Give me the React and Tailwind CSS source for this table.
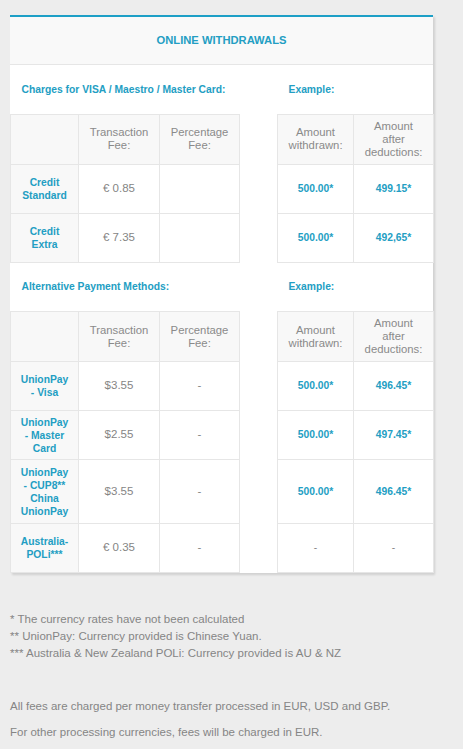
const CARD_ROWS = [
  { label: ["Credit", "Standard"], fee: "€ 0.85", pct: "", amount: "500.00*", after: "499.15*" },
  { label: ["Credit", "Extra"], fee: "€ 7.35", pct: "", amount: "500.00*", after: "492,65*" },
];

const ALT_ROWS = [
  { label: ["UnionPay", "- Visa"], fee: "$3.55", pct: "-", amount: "500.00*", after: "496.45*" },
  { label: ["UnionPay", "- Master", "Card"], fee: "$2.55", pct: "-", amount: "500.00*", after: "497.45*" },
  { label: ["UnionPay", "- CUP8**", "China", "UnionPay"], fee: "$3.55", pct: "-", amount: "500.00*", after: "496.45*", tall: true },
  { label: ["Australia-", "POLi***"], fee: "€ 0.35", pct: "-", amount: "-", after: "-", plain: true },
];

const cell = "border border-[#e6e6e6] text-center align-middle";
const head = `${cell} bg-[#f8f8f8] text-[11.3px] leading-[13px] text-[#8a8a8a] font-normal`;

function Section({ title, rows }) {
  return (
    <table className="w-full border-collapse table-fixed">
      <colgroup>
        <col className="w-[68px]" />
        <col className="w-[81px]" />
        <col className="w-[80px]" />
        <col className="w-[38px]" />
        <col className="w-[76px]" />
        <col className="w-[80px]" />
      </colgroup>
      <tbody>
        <tr className="h-[49px]">
          <td colSpan={3} className="pl-[11px] text-left align-middle text-[10.3px] font-bold text-[#239ec3]">
            {title}
          </td>
          <td />
          <td colSpan={2} className="pl-[11px] text-left align-middle text-[10.3px] font-bold text-[#239ec3]">
            Example:
          </td>
        </tr>
        <tr className="h-[50px]">
          <th className={head} />
          <th className={head}>Transaction<br />Fee:</th>
          <th className={head}>Percentage<br />Fee:</th>
          <td rowSpan={rows.length + 1} className="border-x border-[#e6e6e6] bg-white" />
          <th className={head}>Amount<br />withdrawn:</th>
          <th className={head}>Amount<br />after<br />deductions:</th>
        </tr>
        {rows.map((r, i) => (
          <tr key={i} className={r.tall ? "h-[64px]" : "h-[49px]"}>
            <td className={`${cell} bg-[#f8f8f8] text-[10.3px] leading-[13px] font-bold text-[#239ec3]`}>
              {r.label.map((l, j) => (
                <div key={j}>{l}</div>
              ))}
            </td>
            <td className={`${cell} text-[11.5px] text-[#858585]`}>{r.fee}</td>
            <td className={`${cell} text-[11.5px] text-[#858585]`}>{r.pct}</td>
            <td className={`${cell} text-[10.3px] ${r.plain ? "font-normal text-[#858585]" : "font-bold text-[#239ec3]"}`}>{r.amount}</td>
            <td className={`${cell} text-[10.3px] ${r.plain ? "font-normal text-[#858585]" : "font-bold text-[#239ec3]"}`}>{r.after}</td>
          </tr>
        ))}
      </tbody>
    </table>
  );
}

export default function App() {
  return (
    <div className="min-h-[749px] bg-[#ededed] pt-[15px] pb-4 font-['Liberation_Sans',Arial,sans-serif]">
      <div className="ml-[10px] w-[423px] bg-white border-t-2 border-[#1d9fc6] shadow-[2px_2px_2px_rgba(0,0,0,0.12)]">
        <div className="h-[48px] flex items-center justify-center bg-[#f9f9f9] border-b border-[#e6e6e6] text-[11.2px] font-bold text-[#239ec3]">
          ONLINE WITHDRAWALS
        </div>
        <Section title="Charges for VISA / Maestro / Master Card:" rows={CARD_ROWS} />
        <Section title="Alternative Payment Methods:" rows={ALT_ROWS} />
      </div>

      <div className="ml-[10px] mt-[38px] text-[11.5px] text-[#858585] leading-[17px]">
        <p>* The currency rates have not been calculated</p>
        <p>** UnionPay: Currency provided is Chinese Yuan.</p>
        <p>*** Australia &amp; New Zealand POLi: Currency provided is AU &amp; NZ</p>
        <p className="mt-[36px]">All fees are charged per money transfer processed in EUR, USD and GBP.</p>
        <p className="mt-[9px]">For other processing currencies, fees will be charged in EUR.</p>
      </div>
    </div>
  );
}
